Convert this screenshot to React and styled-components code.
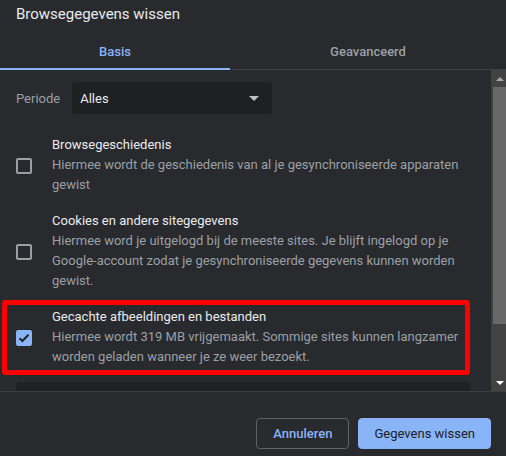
import React from "react";
import styled, { createGlobalStyle } from "styled-components";

const Global = createGlobalStyle`
  html, body { margin: 0; padding: 0; background: #292a2d; }
  body { font-family: Roboto, "Noto Sans", sans-serif; -webkit-font-smoothing: antialiased; }
  * { box-sizing: border-box; }
`;

const Dialog = styled.div`
  width: 506px;
  height: 456px;
  background: #292a2d;
  display: flex;
  flex-direction: column;
  overflow: hidden;
`;

const Title = styled.div`
  padding: 4px 16px 6px;
  font-size: 15px;
  line-height: 20px;
  color: #e8eaed;
`;

const Tabs = styled.div`
  display: flex;
  border-bottom: 1px solid #3c4043;
`;

const Tab = styled.div`
  width: ${(p) => p.$w};
  flex: ${(p) => (p.$grow ? 1 : "none")};
  text-align: center;
  padding: 12px 0 6px;
  font-size: 13px;
  line-height: 20px;
  font-weight: 500;
  color: ${(p) => (p.$active ? "#8ab4f8" : "#9aa0a6")};
  border-bottom: 2px solid ${(p) => (p.$active ? "#8ab4f8" : "transparent")};
  margin-bottom: -1px;
`;

const Body = styled.div`
  height: 322px;
  display: flex;
  border-bottom: 1px solid #3c4043;
`;

const Scroll = styled.div`
  flex: 1;
  overflow: hidden;
  padding: 12px 21px 0 0;
`;

const PeriodRow = styled.div`
  display: flex;
  align-items: center;
  padding-left: 16px;
  gap: 12px;
`;

const Label = styled.span`
  font-size: 13px;
  color: #9aa0a6;
`;

const Select = styled.div`
  width: 200px;
  height: 32px;
  border-radius: 4px;
  background: #1f2022;
  display: flex;
  align-items: center;
  justify-content: space-between;
  padding: 0 8px 0 8px;
  font-size: 13px;
  color: #e8eaed;
`;

const Caret = styled.span`
  width: 0;
  height: 0;
  border-left: 5px solid transparent;
  border-right: 5px solid transparent;
  border-top: 5px solid #bdc1c6;
  margin-right: 5px;
`;

const List = styled.div`
  margin-top: 13px;
`;

const Row = styled.div`
  position: relative;
  display: flex;
  align-items: center;
  padding: 8px 0;
`;

const Box = styled.span`
  flex: none;
  width: 16px;
  height: 16px;
  margin: 2px 20px 0 16px;
  border-radius: 2px;
  border: ${(p) => (p.$checked ? "none" : "2px solid #9aa0a6")};
  background: ${(p) => (p.$checked ? "#8ab4f8" : "transparent")};
  display: flex;
  align-items: center;
  justify-content: center;
`;

const Texts = styled.div`
  flex: 1;
  font-size: 13px;
  line-height: 20px;
`;

const RowTitle = styled.div`
  color: #e8eaed;
`;

const RowDesc = styled.div`
  color: #9aa0a6;
`;

const Highlight = styled.div`
  position: absolute;
  top: 1px;
  bottom: 0;
  left: 2px;
  right: 0;
  border: 5px solid #ff0000;
  border-radius: 3px;
  pointer-events: none;
`;

const Card = styled.div`
  margin: 7px 0 0 16px;
  height: 60px;
  border-radius: 4px;
  background: #202124;
`;

const ScrollBar = styled.div`
  width: 15px;
  background: #424242;
  display: flex;
  flex-direction: column;
  align-items: stretch;
`;

const Arrow = styled.div`
  height: 17px;
  display: flex;
  align-items: center;
  justify-content: center;
  padding-left: 2px;
`;

const Tri = styled.span`
  width: 0;
  height: 0;
  border-left: 4px solid transparent;
  border-right: 4px solid transparent;
  ${(p) => (p.$up ? "border-bottom: 4px solid #a8a8a8;" : "border-top: 4px solid #ffffff;")}
`;

const Thumb = styled.div`
  height: 237px;
  margin-left: 2px;
  background: #686868;
`;

const Spacer = styled.div`
  flex: 1;
`;

const Footer = styled.div`
  flex: 1;
  display: flex;
  justify-content: flex-end;
  align-items: flex-start;
  gap: 9px;
  padding: 26px 15px 0 0;
`;

const Button = styled.button`
  height: 31px;
  padding: 0 ${(p) => (p.$primary ? "15px" : "16px")};
  border-radius: 4px;
  font-family: Roboto, sans-serif;
  font-size: 13px;
  font-weight: ${(p) => (p.$primary ? 400 : 500)};
  border: 1px solid ${(p) => (p.$primary ? "#8ab4f8" : "#5f6368")};
  background: ${(p) => (p.$primary ? "#8ab4f8" : "transparent")};
  color: ${(p) => (p.$primary ? "#202124" : "#8ab4f8")};
`;

const items = [
  {
    title: "Browsegeschiedenis",
    desc: "Hiermee wordt de geschiedenis van al je gesynchroniseerde apparaten gewist",
  },
  {
    title: "Cookies en andere sitegegevens",
    desc: "Hiermee word je uitgelogd bij de meeste sites. Je blijft ingelogd op je Google-account zodat je gesynchroniseerde gegevens kunnen worden gewist.",
  },
  {
    title: "Gecachte afbeeldingen en bestanden",
    desc: "Hiermee wordt 319 MB vrijgemaakt. Sommige sites kunnen langzamer worden geladen wanneer je ze weer bezoekt.",
    checked: true,
    marked: true,
  },
];

export default function App() {
  return (
    <>
      <Global />
      <Dialog>
        <Title>Browsegegevens wissen</Title>
        <Tabs>
          <Tab $w="230px" $active>Basis</Tab>
          <Tab $grow>Geavanceerd</Tab>
        </Tabs>
        <Body>
          <Scroll>
            <PeriodRow>
              <Label>Periode</Label>
              <Select>
                <span>Alles</span>
                <Caret />
              </Select>
            </PeriodRow>
            <List>
              {items.map((it) => (
                <Row key={it.title}>
                  <Box $checked={it.checked}>
                    {it.checked && (
                      <svg width="12" height="10" viewBox="0 0 12 10">
                        <path d="M1.5 5.2 L4.4 8 L10.5 1.8" fill="none" stroke="#202124" strokeWidth="2" />
                      </svg>
                    )}
                  </Box>
                  <Texts>
                    <RowTitle>{it.title}</RowTitle>
                    <RowDesc>{it.desc}</RowDesc>
                  </Texts>
                  {it.marked && <Highlight />}
                </Row>
              ))}
            </List>
            <Card />
          </Scroll>
          <ScrollBar>
            <Arrow><Tri $up /></Arrow>
            <Thumb />
            <Spacer />
            <Arrow><Tri /></Arrow>
          </ScrollBar>
        </Body>
        <Footer>
          <Button>Annuleren</Button>
          <Button $primary>Gegevens wissen</Button>
        </Footer>
      </Dialog>
    </>
  );
}
